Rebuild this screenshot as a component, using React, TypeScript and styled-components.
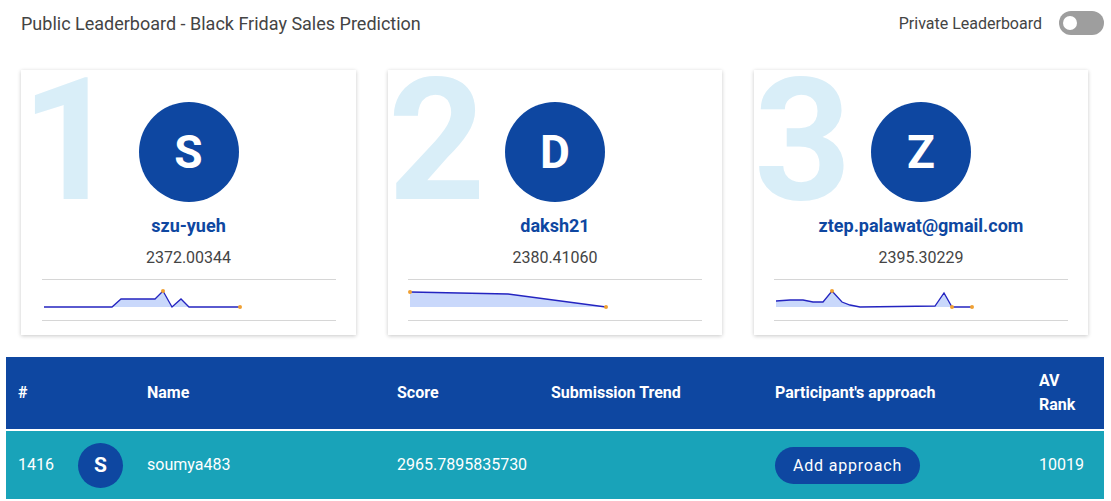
import React, { useState } from "react";
import styled, { createGlobalStyle } from "styled-components";

const GlobalStyle = createGlobalStyle`
  body {
    margin: 0;
    background: #ffffff;
    font-family: Roboto, "Liberation Sans", Arial, sans-serif;
    color: #444444;
  }
`;

const Page = styled.div`
  width: 1111px;
  padding-bottom: 2px;
`;

const TopBar = styled.div`
  display: flex;
  align-items: center;
  justify-content: space-between;
  height: 46px;
  padding: 0 7px 0 21px;
`;

const Title = styled.h1`
  margin: 0;
  font-size: 18px;
  font-weight: 400;
  color: #444;
`;

const ToggleWrap = styled.label`
  display: flex;
  align-items: center;
  gap: 17px;
  font-size: 16px;
  color: #444;
  cursor: pointer;
`;

const Track = styled.span<{ $on: boolean }>`
  position: relative;
  width: 45px;
  height: 24px;
  border-radius: 12px;
  background: ${(p) => (p.$on ? "#0e47a1" : "#9e9e9e")};
`;

const Knob = styled.span<{ $on: boolean }>`
  position: absolute;
  top: 5px;
  left: ${(p) => (p.$on ? "26px" : "4px")};
  width: 14px;
  height: 14px;
  border-radius: 50%;
  background: #fff;
`;

const Cards = styled.div`
  display: grid;
  grid-template-columns: 335px 334px 334px;
  gap: 32px;
  padding: 24px 0 0 21px;
`;

const Card = styled.div`
  position: relative;
  height: 265px;
  box-sizing: border-box;
  padding: 32px 20px 0 20px;
  background: #fff;
  box-shadow: 0 1px 4px rgba(0, 0, 0, 0.22);
  display: flex;
  flex-direction: column;
  align-items: center;
  overflow: hidden;
`;

const BigRank = styled.span`
  position: absolute;
  top: 6px;
  left: 0;
  font-size: 170px;
  font-weight: 700;
  line-height: 130px;
  color: #d9eef8;
`;

const Avatar = styled.div<{ $size: number }>`
  position: relative;
  width: ${(p) => p.$size}px;
  height: ${(p) => p.$size}px;
  border-radius: 50%;
  background: #0e47a1;
  color: #fff;
  font-weight: 700;
  font-size: ${(p) => Math.round(p.$size * 0.46)}px;
  display: flex;
  align-items: center;
  justify-content: center;
  flex-shrink: 0;
`;

const CardName = styled.div`
  position: relative;
  margin-top: 14px;
  font-size: 18px;
  font-weight: 700;
  color: #0e47a1;
  line-height: 20px;
`;

const CardScore = styled.div`
  margin-top: 12px;
  font-size: 16px;
  color: #444;
  line-height: 20px;
`;

const Spark = styled.div`
  margin-top: 11px;
  width: 294px;
  height: 40px;
  border-top: 1px solid #d6d6d6;
  border-bottom: 1px solid #d6d6d6;
`;

const Table = styled.div`
  margin: 22px 7px 0 6px;
`;

const Row = styled.div<{ $head?: boolean }>`
  display: grid;
  grid-template-columns: 129px 250px 154px 224px 264px 1fr;
  align-items: center;
  height: ${(p) => (p.$head ? "72px" : "68px")};
  background: ${(p) => (p.$head ? "#0e47a1" : "#19a3b9")};
  color: #fff;
  font-size: 16px;
  font-weight: ${(p) => (p.$head ? 700 : 400)};
  line-height: 24px;
  & + & {
    margin-top: 2px;
  }
`;

const Cell = styled.div`
  padding-left: 12px;
  display: flex;
  align-items: center;
`;

const RankCell = styled(Cell)`
  gap: 24px;
`;

const ApproachButton = styled.button`
  height: 37px;
  width: 145px;
  border: none;
  border-radius: 19px;
  background: #0e47a1;
  color: #fff;
  font-family: inherit;
  font-size: 16px;
  letter-spacing: 0.8px;
  cursor: pointer;
`;

type Pt = [number, number, boolean?];

const Sparkline = ({ pts }: { pts: Pt[] }) => {
  const line = pts.map(([x, y]) => `${x},${y}`).join(" ");
  const area = `${pts[0][0]},26 ${line} ${pts[pts.length - 1][0]},26`;
  return (
    <svg width="294" height="40" viewBox="0 -1 294 40">
      <polygon points={area} fill="#c9d8fb" />
      <polyline points={line} fill="none" stroke="#2424c0" strokeWidth="1.3" />
      {pts
        .filter((p) => p[2])
        .map(([x, y], i) => (
          <circle key={i} cx={x} cy={y} r="2" fill="#f0a133" />
        ))}
    </svg>
  );
};

const leaders = [
  {
    rank: 1,
    name: "szu-yueh",
    score: "2372.00344",
    pts: [[2, 26], [70, 26], [79, 18], [113, 18], [121, 10, true], [130, 26], [139, 18], [147, 26], [198, 26, true]] as Pt[],
  },
  {
    rank: 2,
    name: "daksh21",
    score: "2380.41060",
    pts: [[2, 11, true], [100, 13], [198, 26, true]] as Pt[],
  },
  {
    rank: 3,
    name: "ztep.palawat@gmail.com",
    score: "2395.30229",
    pts: [[2, 20], [16, 19], [29, 19], [39, 21], [49, 21], [58, 10, true], [68, 21], [76, 24], [86, 26], [161, 25], [170, 12], [178, 26, true], [198, 26, true]] as Pt[],
  },
];

const App = () => {
  const [isPrivate, setIsPrivate] = useState(false);

  return (
    <Page>
      <GlobalStyle />
      <TopBar>
        <Title>Public Leaderboard - Black Friday Sales Prediction</Title>
        <ToggleWrap onClick={() => setIsPrivate(!isPrivate)}>
          Private Leaderboard
          <Track $on={isPrivate}>
            <Knob $on={isPrivate} />
          </Track>
        </ToggleWrap>
      </TopBar>

      <Cards>
        {leaders.map((l) => (
          <Card key={l.rank}>
            <BigRank>{l.rank}</BigRank>
            <Avatar $size={100}>{l.name[0].toUpperCase()}</Avatar>
            <CardName>{l.name}</CardName>
            <CardScore>{l.score}</CardScore>
            <Spark>
              <Sparkline pts={l.pts} />
            </Spark>
          </Card>
        ))}
      </Cards>

      <Table>
        <Row $head>
          <Cell>#</Cell>
          <Cell>Name</Cell>
          <Cell>Score</Cell>
          <Cell>Submission Trend</Cell>
          <Cell>Participant's approach</Cell>
          <Cell>
            AV
            <br />
            Rank
          </Cell>
        </Row>
        <Row>
          <RankCell>
            1416
            <Avatar $size={45}>S</Avatar>
          </RankCell>
          <Cell>soumya483</Cell>
          <Cell>2965.7895835730</Cell>
          <Cell />
          <Cell>
            <ApproachButton>Add approach</ApproachButton>
          </Cell>
          <Cell>10019</Cell>
        </Row>
      </Table>
    </Page>
  );
};

export default App;
